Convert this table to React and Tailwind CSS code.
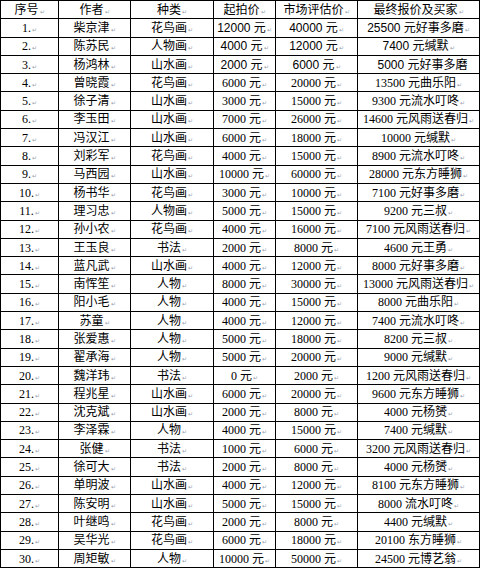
import React from 'react';

const rows = [
  ['柴京津', '花鸟画', '12000', '40000', '25500 元好事多磨'],
  ['陈苏民', '人物画', '4000', '12000', '7400 元缄默'],
  ['杨鸿林', '山水画', '2000', '6000', '5000 元好事多磨'],
  ['曾晓霞', '花鸟画', '6000', '20000', '13500 元曲乐阳'],
  ['徐子清', '山水画', '3000', '15000', '9300 元流水叮咚'],
  ['李玉田', '山水画', '7000', '26000', '14600 元风雨送春归'],
  ['冯汉江', '山水画', '6000', '18000', '10000 元缄默'],
  ['刘彩军', '花鸟画', '4000', '15000', '8900 元流水叮咚'],
  ['马西园', '山水画', '10000', '60000', '28000 元东方睡狮'],
  ['杨书华', '花鸟画', '3000', '10000', '7100 元好事多磨'],
  ['理习忠', '人物画', '5000', '15000', '9200 元三叔'],
  ['孙小农', '花鸟画', '4000', '16000', '7100 元风雨送春归'],
  ['王玉良', '书法', '2000', '8000', '4600 元王勇'],
  ['蓝凡武', '山水画', '4000', '12000', '8000 元好事多磨'],
  ['南恽笙', '人物', '8000', '30000', '13000 元风雨送春归'],
  ['阳小毛', '人物', '4000', '15000', '8000 元曲乐阳'],
  ['苏童', '人物', '4000', '12000', '7400 元流水叮咚'],
  ['张爱惠', '人物', '5000', '18000', '8200 元三叔'],
  ['翟承海', '人物', '5000', '20000', '9000 元缄默'],
  ['魏洋玮', '书法', '0', '2000', '1200 元风雨送春归'],
  ['程兆星', '山水画', '6000', '20000', '9600 元东方睡狮'],
  ['沈克斌', '山水画', '2000', '8000', '4000 元杨赟'],
  ['李泽霖', '人物', '4000', '15000', '7400 元缄默'],
  ['张健', '书法', '1000', '6000', '3200 元风雨送春归'],
  ['徐可大', '书法', '2000', '8000', '4000 元杨赟'],
  ['单明波', '山水画', '4000', '12000', '8100 元东方睡狮'],
  ['陈安明', '山水画', '5000', '15000', '8000 流水叮咚'],
  ['叶继鸣', '花鸟画', '2000', '8000', '4400 元缄默'],
  ['吴华光', '花鸟画', '6000', '18000', '20100 东方睡狮'],
  ['周矩敏', '人物', '10000', '50000', '24500 元博艺翁'],
];

const headers = ['序号', '作者', '种类', '起拍价', '市场评估价', '最终报价及买家'];

// Word 段落标记
const Mark = () => (
  <span className="ml-[1px] align-baseline text-[6px] leading-none text-gray-400">↵</span>
);

const Cell = ({ children, serif, mark = true }) => (
  <td
    className={`h-[18.3px] border border-black p-0 text-center text-[12px] leading-none whitespace-nowrap text-black ${
      serif
        ? "font-['Liberation_Serif','Noto_Sans_CJK_SC',serif]"
        : "font-['Liberation_Sans','Noto_Sans_CJK_SC',sans-serif]"
    }`}
  >
    {children}
    {mark && <Mark />}
  </td>
);

export default function App() {
  return (
    <div className="h-[568px] w-[481px] overflow-hidden bg-white">
      <table className="w-[479px] table-fixed border-collapse">
        <colgroup>
          <col className="w-[58px]" />
          <col className="w-[72px]" />
          <col className="w-[83px]" />
          <col className="w-[62px]" />
          <col className="w-[82px]" />
          <col className="w-[122px]" />
        </colgroup>
        <thead>
          <tr>
            {headers.map((h) => (
              <Cell key={h}>{h}</Cell>
            ))}
          </tr>
        </thead>
        <tbody>
          {rows.map((r, i) => {
            const serif = i > 2;
            return (
              <tr key={i}>
                <Cell serif>{i + 1}.</Cell>
                <Cell>{r[0]}</Cell>
                <Cell>{r[1]}</Cell>
                <Cell serif={serif}>{r[2]} 元</Cell>
                <Cell serif={serif}>{r[3]} 元</Cell>
                <Cell serif={serif} mark={i !== 2}>
                  {i === 2 ? <span className="pl-[8px]">{r[4]}</span> : r[4]}
                </Cell>
              </tr>
            );
          })}
        </tbody>
      </table>
    </div>
  );
}
